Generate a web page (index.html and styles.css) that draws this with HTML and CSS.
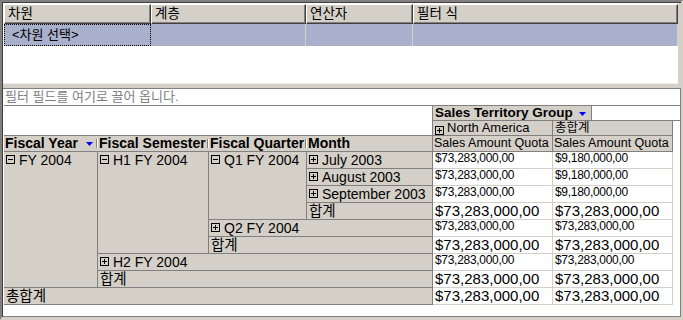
FILE: index.html
```html
<!DOCTYPE html>
<html lang="ko">
<head>
<meta charset="UTF-8">
<title>피벗 테이블</title>
<link rel="stylesheet" href="styles.css">
</head>
<body>
<div class="frame">
    <div class="filters">
        <div class="frow">
            <div class="fh w1">차원</div>
            <div class="fh w2">계층</div>
            <div class="fh w3">연산자</div>
            <div class="fh w4">필터 식</div>
        </div>
        <div class="frow">
            <div class="fs w1 focus">&lt;차원 선택&gt;</div>
            <div class="fs w2"></div>
            <div class="fs w3"></div>
            <div class="fs w4"></div>
        </div>
    </div>
    <div class="splitter"></div>
    <div class="pivot-panel">
        <div class="dropzone">필터 필드를 여기로 끌어 옵니다.</div>
        <div class="pivot">
            <div class="blank"></div>
            <div class="stg-row">
                <div class="stg">Sales Territory Group<svg class="arrow" width="7" height="4" viewBox="0 0 7 4"><path d="M0 0h7L3.5 4z" fill="#0000ff"/></svg></div>
                <div class="stg-fill"></div>
            </div>
            <div class="edge"></div>
            <div class="h colh"><svg class="tg" width="9" height="9" viewBox="0 0 9 9"><rect x=".5" y=".5" width="8" height="8" fill="none" stroke="#000"/><path d="M2 4.5h5M4.5 2v5" stroke="#000"/></svg>North America</div>
            <div class="h colh kr">총합계</div>

            <div class="ch"><span class="lbl">Fiscal Year</span><svg class="arrow fy" width="7" height="4" viewBox="0 0 7 4"><path d="M0 0h7L3.5 4z" fill="#0000ff"/></svg><span class="tick"></span></div>
            <div class="ch"><span class="lbl">Fiscal Semester</span><span class="tick"></span></div>
            <div class="ch"><span class="lbl">Fiscal Quarter</span><span class="tick"></span></div>
            <div class="ch last"><span class="lbl">Month</span></div>
            <div class="h saq">Sales Amount Quota</div>
            <div class="h saq">Sales Amount Quota</div>

            <div class="h r8"><svg class="tg" width="9" height="9" viewBox="0 0 9 9"><rect x=".5" y=".5" width="8" height="8" fill="none" stroke="#000"/><path d="M2 4.5h5" stroke="#000"/></svg>FY 2004</div>
            <div class="h r6"><svg class="tg" width="9" height="9" viewBox="0 0 9 9"><rect x=".5" y=".5" width="8" height="8" fill="none" stroke="#000"/><path d="M2 4.5h5" stroke="#000"/></svg>H1 FY 2004</div>
            <div class="h r4"><svg class="tg" width="9" height="9" viewBox="0 0 9 9"><rect x=".5" y=".5" width="8" height="8" fill="none" stroke="#000"/><path d="M2 4.5h5" stroke="#000"/></svg>Q1 FY 2004</div>
            <div class="h"><svg class="tg" width="9" height="9" viewBox="0 0 9 9"><rect x=".5" y=".5" width="8" height="8" fill="none" stroke="#000"/><path d="M2 4.5h5M4.5 2v5" stroke="#000"/></svg>July 2003</div>
            <div class="v">$73,283,000,00</div>
            <div class="v">$9,180,000,00</div>

            <div class="h"><svg class="tg" width="9" height="9" viewBox="0 0 9 9"><rect x=".5" y=".5" width="8" height="8" fill="none" stroke="#000"/><path d="M2 4.5h5M4.5 2v5" stroke="#000"/></svg>August 2003</div>
            <div class="v">$73,283,000,00</div>
            <div class="v">$9,180,000,00</div>

            <div class="h"><svg class="tg" width="9" height="9" viewBox="0 0 9 9"><rect x=".5" y=".5" width="8" height="8" fill="none" stroke="#000"/><path d="M2 4.5h5M4.5 2v5" stroke="#000"/></svg>September 2003</div>
            <div class="v">$73,283,000,00</div>
            <div class="v">$9,180,000,00</div>

            <div class="h kr">합계</div>
            <div class="v big">$73,283,000,00</div>
            <div class="v big">$73,283,000,00</div>

            <div class="h c2"><svg class="tg" width="9" height="9" viewBox="0 0 9 9"><rect x=".5" y=".5" width="8" height="8" fill="none" stroke="#000"/><path d="M2 4.5h5M4.5 2v5" stroke="#000"/></svg>Q2 FY 2004</div>
            <div class="v">$73,283,000,00</div>
            <div class="v">$73,283,000,00</div>

            <div class="h c2 kr">합계</div>
            <div class="v big">$73,283,000,00</div>
            <div class="v big">$73,283,000,00</div>

            <div class="h c3"><svg class="tg" width="9" height="9" viewBox="0 0 9 9"><rect x=".5" y=".5" width="8" height="8" fill="none" stroke="#000"/><path d="M2 4.5h5M4.5 2v5" stroke="#000"/></svg>H2 FY 2004</div>
            <div class="v">$73,283,000,00</div>
            <div class="v">$73,283,000,00</div>

            <div class="h c3 kr">합계</div>
            <div class="v big">$73,283,000,00</div>
            <div class="v big">$73,283,000,00</div>

            <div class="h c4 kr">총합계</div>
            <div class="v big">$73,283,000,00</div>
            <div class="v big">$73,283,000,00</div>
        </div>
    </div>
</div>
</body>
</html>
```

FILE: styles.css
```css
* {
    box-sizing: border-box;
}
body {
    margin: 0;
    font-family: "Liberation Sans", "Noto Sans CJK KR", sans-serif;
    color: #000;
    background: #d4d0c8;
}
.frame {
    width: 683px;
    height: 320px;
    display: flex;
    flex-direction: column;
    background: #d4d0c8;
    border-style: solid;
    border-width: 2px 2px 3px 2px;
    border-color: #808080 #d4d0c8 #d4d0c8 #808080;
    box-shadow: inset 1px 1px #404040;
    padding: 1px 0 0 1px;
}

/* filter grid */
.filters {
    height: 81px;
    flex: none;
    margin-right: 2px;
    background: #fff;
    border-right: 1px solid #d4d0c8;
    border-bottom: 1px solid #ecebe6;
    padding: 1px 0 0 1px;
}
.frow {
    display: flex;
}
.w1 { width: 147px; }
.w2 { width: 155px; }
.w3 { width: 107px; }
.w4 { width: 265px; }
.fh {
    height: 20px;
    background: #d4d0c8;
    border-top: 1px solid #fff;
    border-left: 1px solid #fff;
    border-right: 1px solid #404040;
    border-bottom: 1px solid #404040;
    box-shadow: inset -1px -1px #808080;
    font-size: 13.5px;
    line-height: 17px;
    padding-left: 3px;
}
.fs {
    height: 22px;
    background: #a9b0cb;
    border-right: 1px solid #d4d0c8;
    font-size: 13px;
    line-height: 20px;
    padding-left: 7px;
}
.fs.focus {
    border: 1px dotted #000;
}
.splitter {
    height: 4px;
    flex: none;
}

/* pivot area */
.pivot-panel {
    flex: 1;
    background: #fff;
    border: 1px solid #808080;
    border-left: none;
    padding-left: 1px;
}
.dropzone {
    height: 17px;
    border-bottom: 1px solid #808080;
    color: #808080;
    font-size: 13px;
    line-height: 16px;
    padding-left: 1px;
}
.pivot {
    display: grid;
    grid-template-columns: 94px 111px 98px 126px 120px 120px 1fr;
    grid-template-rows: 15px 15px 16px repeat(9, 17px);
}
.blank {
    grid-column: span 4;
    grid-row: span 2;
    border-right: 1px solid #808080;
    border-bottom: 1px solid #808080;
}
.edge {
    grid-column: 7;
    grid-row: 2 / span 11;
}
.stg-row {
    grid-column: span 3;
    display: flex;
}
.stg {
    display: flex;
    align-items: center;
    background: #d4d0c8;
    border-right: 1px solid #808080;
    border-bottom: 1px solid #808080;
    font-weight: bold;
    font-size: 13.5px;
    line-height: 14px;
    padding: 0 5px 0 2px;
    white-space: nowrap;
}
.stg .arrow {
    margin-left: 6px;
    margin-top: 2px;
}
.stg-fill {
    flex: 1;
    border-bottom: 1px solid #808080;
}

.h {
    display: flex;
    align-items: flex-start;
    background: #d4d0c8;
    border-right: 1px solid #808080;
    border-bottom: 1px solid #808080;
    font-size: 14px;
    line-height: 16px;
    padding-left: 2px;
    white-space: nowrap;
    overflow: hidden;
}
.h .tg {
    flex: none;
    margin: 3px 4px 0 0;
}
.h.kr {
    font-size: 14.5px;
}
.colh {
    font-size: 13px;
    line-height: 14px;
    align-items: flex-end;
}
.colh .tg {
    margin: 0 3px 0 0;
}
.colh.kr {
    font-size: 12.5px;
    align-items: flex-start;
}
.saq {
    font-size: 12.5px;
    line-height: 15px;
    padding-left: 1px;
}
.r8 { grid-row: span 8; }
.r6 { grid-row: span 6; }
.r4 { grid-row: span 4; }
.c2 { grid-column: span 2; }
.c3 { grid-column: span 3; }
.c4 { grid-column: span 4; }

.ch {
    display: flex;
    align-items: center;
    background: #d4d0c8;
    border-bottom: 1px solid #808080;
    font-weight: bold;
    font-size: 14px;
    line-height: 15px;
    padding-left: 1px;
    white-space: nowrap;
    overflow: hidden;
}
.ch .lbl {
    min-width: 0;
    overflow: hidden;
}
.ch.last {
    border-right: 1px solid #808080;
}
.arrow.fy {
    flex: none;
    margin-left: auto;
    margin-right: 3px;
}
.tick {
    flex: none;
    width: 2px;
    height: 9px;
    margin-left: auto;
    border-left: 1px solid #808080;
    border-right: 1px solid #fff;
}
.arrow.fy + .tick {
    margin-left: 0;
}

.v {
    background: #fff;
    border-right: 1px solid #d4d0c8;
    border-bottom: 1px solid #d4d0c8;
    padding-left: 2px;
    font-size: 12px;
    letter-spacing: -0.3px;
    line-height: 13px;
    white-space: nowrap;
    overflow: hidden;
}
.v.big {
    font-size: 15px;
    letter-spacing: 0;
    line-height: 16px;
}
```
